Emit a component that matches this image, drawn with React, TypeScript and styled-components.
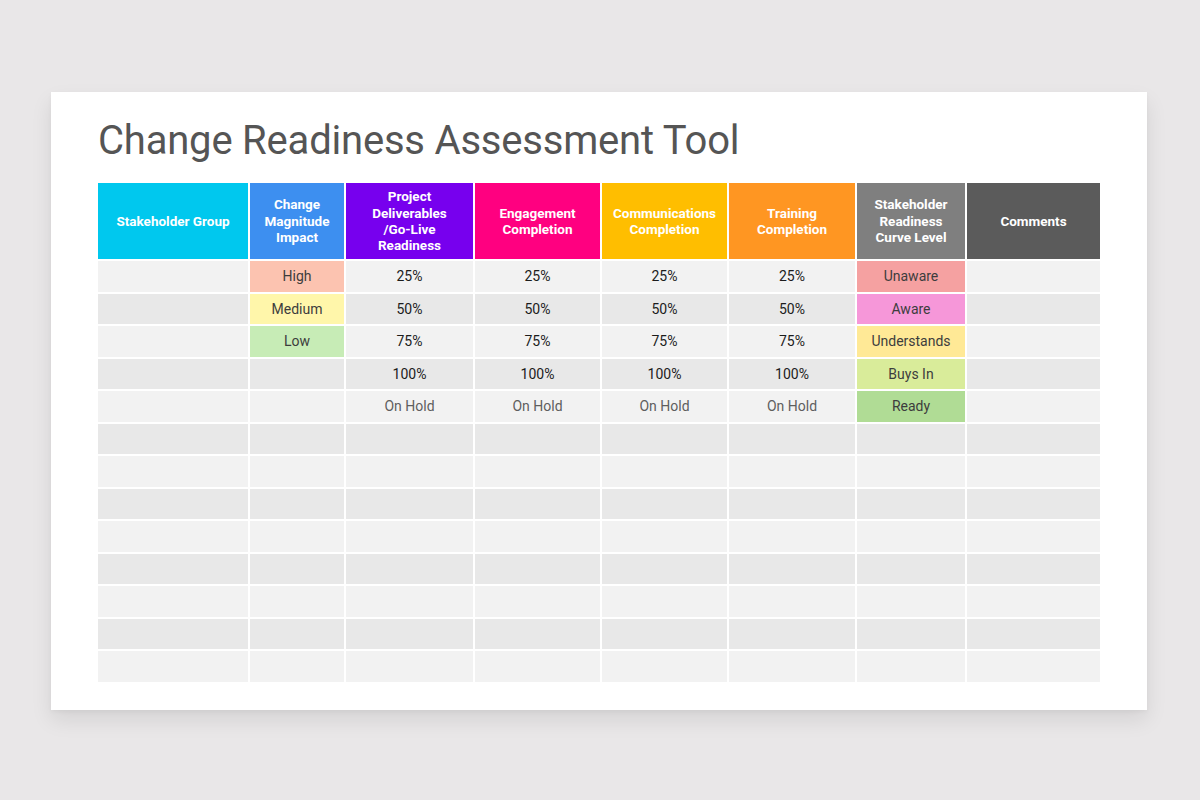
import * as React from "react";
import styled, { createGlobalStyle } from "styled-components";

const GlobalStyle = createGlobalStyle`
  html, body {
    margin: 0;
    padding: 0;
    background: #e9e7e8;
    font-family: Roboto, "Liberation Sans", sans-serif;
  }
`;

const Page = styled.div`
  width: 1200px;
  height: 800px;
  padding-top: 92px;
  box-sizing: border-box;
`;

const Card = styled.div`
  margin-left: 51px;
  width: 1096px;
  height: 618px;
  box-sizing: border-box;
  padding: 25px 47px 0 47px;
  background: #ffffff;
  box-shadow: 0 10px 20px rgba(0, 0, 0, 0.09), 0 2px 4px rgba(0, 0, 0, 0.04);
`;

const Title = styled.h1`
  margin: 0 0 18px;
  font-weight: 400;
  font-size: 40px;
  line-height: 48px;
  color: #555555;
  letter-spacing: -0.2px;
`;

const Grid = styled.div`
  display: grid;
  grid-template-columns: 150px 94px 127px 125px 125px 126px 108px 133px;
  grid-template-rows: 76px repeat(13, 30.5px);
  gap: 2px;
  width: 1002px;
`;

const HeadCell = styled.div<{ $bg: string }>`
  display: flex;
  align-items: center;
  justify-content: center;
  text-align: center;
  padding: 0 4px;
  background: ${(p) => p.$bg};
  color: #ffffff;
  font-weight: 700;
  font-size: 13.5px;
  line-height: 16.4px;
`;

const Cell = styled.div<{ $bg: string; $muted?: boolean; $label?: boolean }>`
  display: flex;
  align-items: center;
  justify-content: center;
  background: ${(p) => p.$bg};
  font-size: 14px;
  color: ${(p) => (p.$muted ? "#5e5e5e" : p.$label ? "#3d3d3d" : "#1c1c1c")};
`;

const headers: { label: React.ReactNode; bg: string }[] = [
  { label: "Stakeholder Group", bg: "#00c8ee" },
  { label: <>Change<br />Magnitude<br />Impact</>, bg: "#3d8ff0" },
  { label: <>Project<br />Deliverables<br />/Go-Live<br />Readiness</>, bg: "#7700ee" },
  { label: <>Engagement<br />Completion</>, bg: "#ff0080" },
  { label: <>Communications<br />Completion</>, bg: "#ffbe00" },
  { label: <>Training<br />Completion</>, bg: "#ff9622" },
  { label: <>Stakeholder<br />Readiness<br />Curve Level</>, bg: "#7f7f7f" },
  { label: "Comments", bg: "#5b5b5b" },
];

const magnitude: [string, string][] = [
  ["High", "#fcc3b0"],
  ["Medium", "#fff6aa"],
  ["Low", "#c7ecb6"],
];

const curve: [string, string][] = [
  ["Unaware", "#f5a1a1"],
  ["Aware", "#f697d9"],
  ["Understands", "#ffe996"],
  ["Buys In", "#d9ec9a"],
  ["Ready", "#b0dc95"],
];

const levels = ["25%", "50%", "75%", "100%", "On Hold"];

export default function App() {
  const rows = Array.from({ length: 13 }, (_, i) => i);

  return (
    <Page>
      <GlobalStyle />
      <Card>
        <Title>Change Readiness Assessment Tool</Title>
        <Grid>
          {headers.map((h, i) => (
            <HeadCell key={i} $bg={h.bg}>
              {h.label}
            </HeadCell>
          ))}
          {rows.map((r) => {
            const base = r % 2 === 0 ? "#f2f2f2" : "#e8e8e8";
            const mag = magnitude[r];
            const lvl = levels[r];
            const cur = curve[r];
            return (
              <React.Fragment key={r}>
                <Cell $bg={base} />
                <Cell $bg={mag ? mag[1] : base} $label>
                  {mag ? mag[0] : ""}
                </Cell>
                {[0, 1, 2, 3].map((c) => (
                  <Cell key={c} $bg={base} $muted={lvl === "On Hold"}>
                    {lvl ?? ""}
                  </Cell>
                ))}
                <Cell $bg={cur ? cur[1] : base} $label>
                  {cur ? cur[0] : ""}
                </Cell>
                <Cell $bg={base} />
              </React.Fragment>
            );
          })}
        </Grid>
      </Card>
    </Page>
  );
}
